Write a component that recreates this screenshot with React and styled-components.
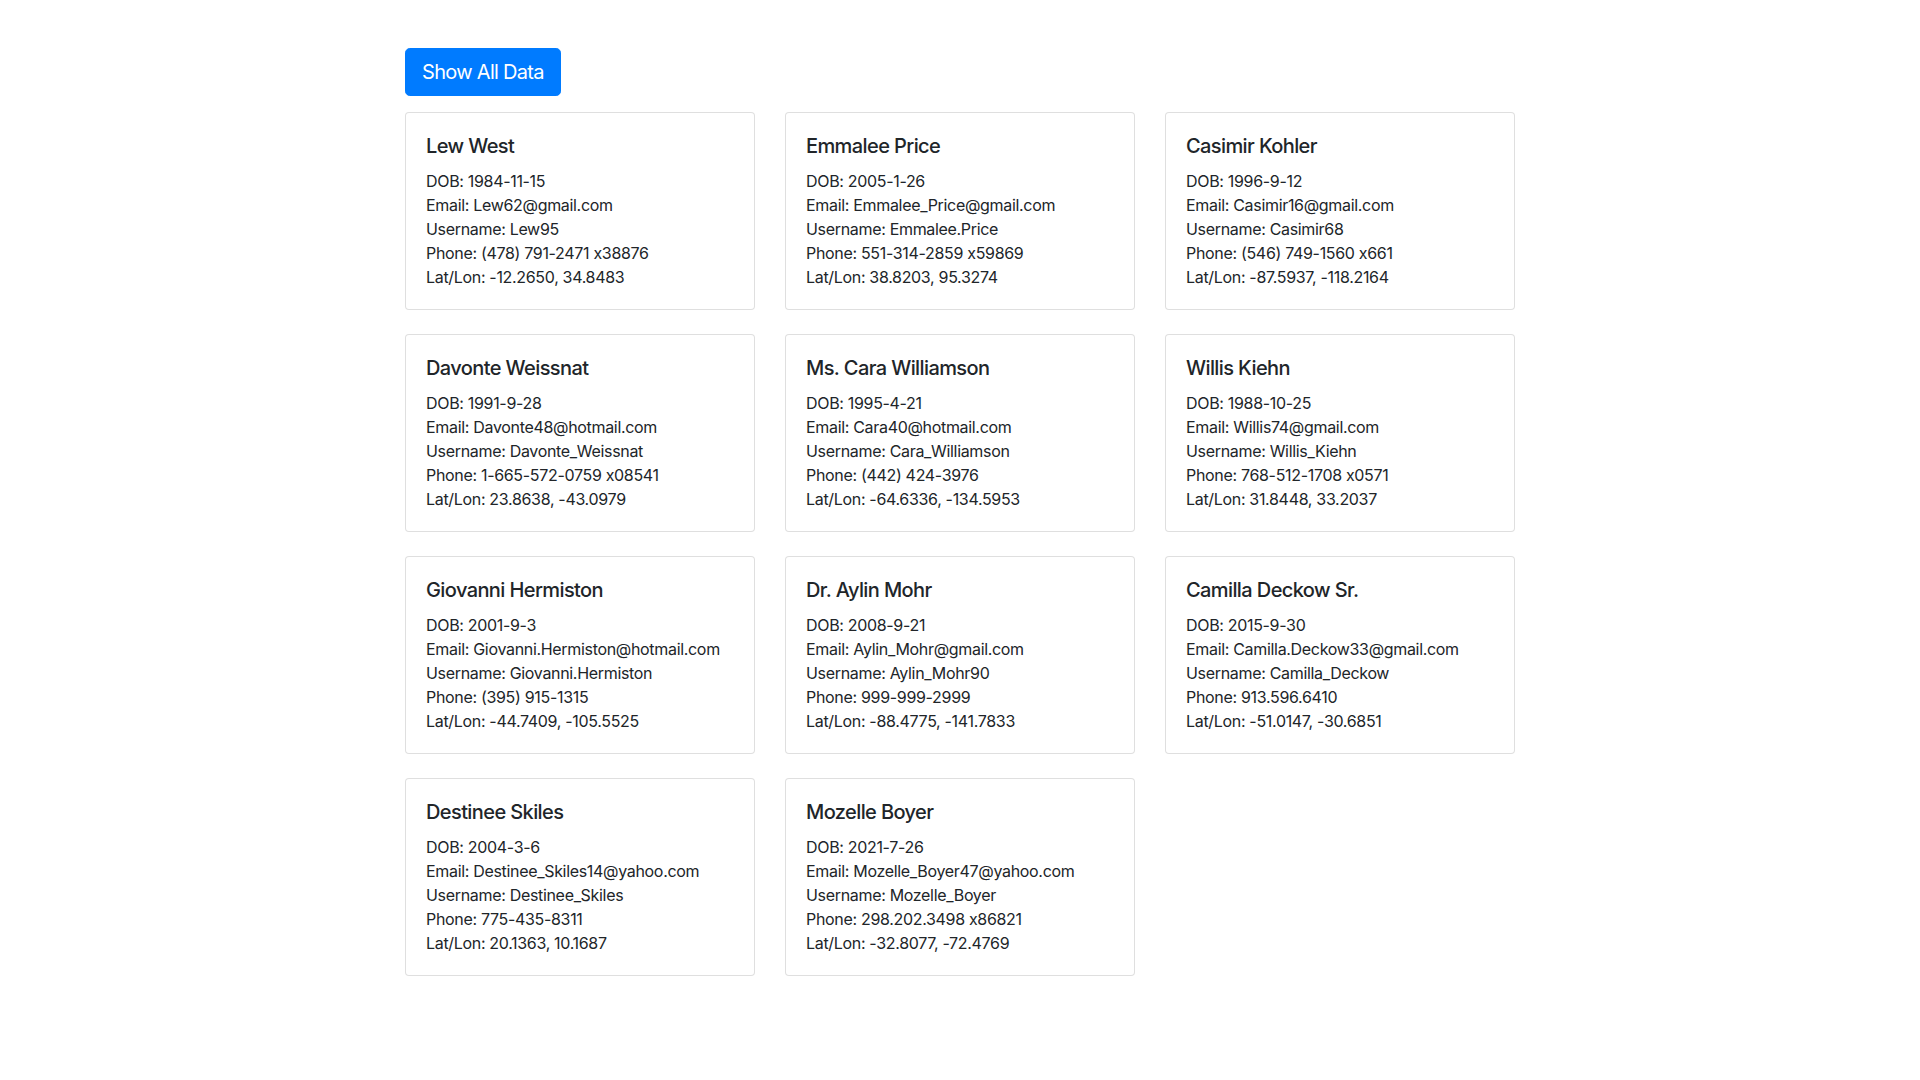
import React from 'react';
import styled, { createGlobalStyle } from 'styled-components';

const GlobalStyle = createGlobalStyle`
  *, *::before, *::after {
    box-sizing: border-box;
  }

  body {
    margin: 0;
    background-color: #FFFFFF;
    color: #212529;
    font-family: Inter, 'Noto Sans', 'Liberation Sans', sans-serif;
    font-feature-settings: 'calt' 0;
    font-size: 16px;
    line-height: 1.5;
    letter-spacing: -0.02em;
  }
`;

const Container = styled.div`
  width: 1140px;
  margin: 0 auto;
  padding: 48px 15px;
`;

const Button = styled.button`
  background-color: #007bff;
  border: 1px solid #007bff;
  border-radius: 0.3rem;
  color: #FFFFFF;
  font-family: inherit;
  font-feature-settings: inherit;
  font-size: 1.25rem;
  letter-spacing: -0.035em;
  line-height: 1.5;
  padding: 0.5rem 1rem;
  margin-bottom: 16px;
  cursor: pointer;

  &:hover {
    background-color: #0069d9;
  }
`;

const Grid = styled.div`
  display: grid;
  grid-template-columns: repeat(3, 350px);
  column-gap: 30px;
  row-gap: 24px;
`;

const Card = styled.div`
  border: 1px solid rgba(0, 0, 0, 0.125);
  border-radius: 0.25rem;
  background-color: #FFFFFF;
  padding: 20px;
`;

const Title = styled.h5`
  margin: 0 0 11px;
  padding-top: 1px;
  font-size: 1.25rem;
  font-weight: 500;
  letter-spacing: -0.03em;
  line-height: 24px;
`;

const Line = styled.div`
  font-size: 1rem;
  line-height: 24px;
`;

const people = [
  { name: 'Lew West', dob: '1984-11-15', email: 'Lew62@gmail.com', username: 'Lew95', phone: '(478) 791-2471 x38876', latlon: '-12.2650, 34.8483' },
  { name: 'Emmalee Price', dob: '2005-1-26', email: 'Emmalee_Price@gmail.com', username: 'Emmalee.Price', phone: '551-314-2859 x59869', latlon: '38.8203, 95.3274' },
  { name: 'Casimir Kohler', dob: '1996-9-12', email: 'Casimir16@gmail.com', username: 'Casimir68', phone: '(546) 749-1560 x661', latlon: '-87.5937, -118.2164' },
  { name: 'Davonte Weissnat', dob: '1991-9-28', email: 'Davonte48@hotmail.com', username: 'Davonte_Weissnat', phone: '1-665-572-0759 x08541', latlon: '23.8638, -43.0979' },
  { name: 'Ms. Cara Williamson', dob: '1995-4-21', email: 'Cara40@hotmail.com', username: 'Cara_Williamson', phone: '(442) 424-3976', latlon: '-64.6336, -134.5953' },
  { name: 'Willis Kiehn', dob: '1988-10-25', email: 'Willis74@gmail.com', username: 'Willis_Kiehn', phone: '768-512-1708 x0571', latlon: '31.8448, 33.2037' },
  { name: 'Giovanni Hermiston', dob: '2001-9-3', email: 'Giovanni.Hermiston@hotmail.com', username: 'Giovanni.Hermiston', phone: '(395) 915-1315', latlon: '-44.7409, -105.5525' },
  { name: 'Dr. Aylin Mohr', dob: '2008-9-21', email: 'Aylin_Mohr@gmail.com', username: 'Aylin_Mohr90', phone: '999-999-2999', latlon: '-88.4775, -141.7833' },
  { name: 'Camilla Deckow Sr.', dob: '2015-9-30', email: 'Camilla.Deckow33@gmail.com', username: 'Camilla_Deckow', phone: '913.596.6410', latlon: '-51.0147, -30.6851' },
  { name: 'Destinee Skiles', dob: '2004-3-6', email: 'Destinee_Skiles14@yahoo.com', username: 'Destinee_Skiles', phone: '775-435-8311', latlon: '20.1363, 10.1687' },
  { name: 'Mozelle Boyer', dob: '2021-7-26', email: 'Mozelle_Boyer47@yahoo.com', username: 'Mozelle_Boyer', phone: '298.202.3498 x86821', latlon: '-32.8077, -72.4769' },
];

export default function App() {
  return (
    <>
      <GlobalStyle />
      <Container>
        <Button>Show All Data</Button>
        <Grid>
          {people.map(person => (
            <Card key={person.username}>
              <Title>{person.name}</Title>
              <Line>DOB: {person.dob}</Line>
              <Line>Email: {person.email}</Line>
              <Line>Username: {person.username}</Line>
              <Line>Phone: {person.phone}</Line>
              <Line>Lat/Lon: {person.latlon}</Line>
            </Card>
          ))}
        </Grid>
      </Container>
    </>
  );
}
